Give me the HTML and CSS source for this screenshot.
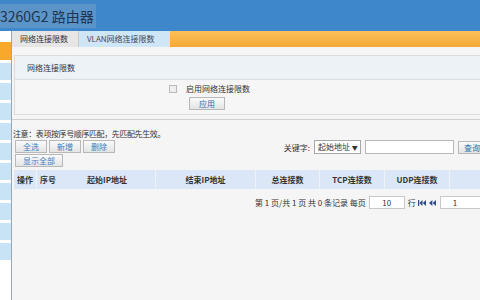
FILE: index.html
```html
<!DOCTYPE html>
<html lang="zh">
<head>
<meta charset="utf-8">
<link rel="stylesheet" href="styles.css">
</head>
<body>
<div class="header"><span class="title">3260G2 路由器</span></div>
<div class="body">
  <div class="sidebar">
    <div class="sb sb-a"></div>
    <div class="sb sb-o"></div>
    <div class="sb"></div>
    <div class="sb"></div>
    <div class="sb"></div>
    <div class="sb"></div>
    <div class="sb"></div>
    <div class="sb"></div>
    <div class="sb"></div>
    <div class="sb"></div>
    <div class="sb"></div>
    <div class="sb"></div>
  </div>
  <div class="main">
    <div class="tabs">
      <div class="tab tab-active">网络连接限数</div>
      <div class="tab tab-second">VLAN网络连接限数</div>
    </div>
    <div class="content">
      <div class="box">
        <div class="box-head">网络连接限数</div>
        <div class="box-body">
          <label class="check"><span class="cb"></span>启用网络连接限数</label>
          <button class="btn apply">应用</button>
        </div>
      </div>
      <div class="rule"></div>
      <div class="note">注意：表项按序号顺序匹配，先匹配先生效。</div>
      <div class="toolbar">
        <div class="left-tools">
          <div class="btn-row">
            <button class="btn">全选</button><button class="btn">新增</button><button class="btn">删除</button>
          </div>
          <div class="btn-row"><button class="btn">显示全部</button></div>
        </div>
        <div class="search">
          <span class="kw">关键字:</span>
          <span class="select">起始地址 <span class="arrow">▼</span></span>
          <span class="input"></span>
          <button class="btn">查询</button>
        </div>
      </div>
      <div class="thead">
        <div class="th c1">操作</div>
        <div class="th c2">序号</div>
        <div class="th c3">起始IP地址</div>
        <div class="th c4">结束IP地址</div>
        <div class="th c5">总连接数</div>
        <div class="th c6">TCP连接数</div>
        <div class="th c7">UDP连接数</div>
        <div class="th c8"></div>
      </div>
      <div class="pager">
        <span class="ptext">第 1 页/共 1 页 共 0 条记录 每页</span>
        <span class="pinput">10</span>
        <span class="ptext">行</span>
        <svg class="nav" width="8" height="6" viewBox="0 0 8 6"><rect x="0" y="0" width="1.2" height="6" fill="#2a4a8c"/><polygon points="4.5,0 4.5,6 1.3,3" fill="#2a4a8c"/><polygon points="8,0 8,6 4.8,3" fill="#2a4a8c"/></svg>
        <svg class="nav nav2" width="7" height="6" viewBox="0 0 7 6"><polygon points="3.4,0 3.4,6 0,3" fill="#2a4a8c"/><polygon points="7,0 7,6 3.6,3" fill="#2a4a8c"/></svg>
        <span class="pinput pinput2">1</span>
      </div>
    </div>
  </div>
</div>
</body>
</html>
```

FILE: styles.css
```css
html, body {
  margin: 0;
  padding: 0;
  width: 480px;
  height: 300px;
  overflow: hidden;
  background: #f5f5f5;
  font-family: "Noto Sans CJK SC", "Liberation Sans", sans-serif;
  font-size: 8px;
  color: #333;
}
.header {
  height: 31px;
  background: #3e87ca;
  display: flex;
  align-items: center;
}
.title {
  font-size: 14px;
  color: #1f3552;
  background: #5a94c8;
  padding: 1px 2px 1px 0;
  line-height: 22px;
}
.body {
  display: flex;
  height: 269px;
}
.sidebar {
  width: 11px;
  border-right: 1px solid #9aa6b3;
  display: flex;
  flex-direction: column;
  gap: 3px;
  background: #fff;
}
.sb {
  height: 17px;
  background: #c8e2f6;
}
.sb-a {
  height: 8px;
  background: #fff;
}
.sb-o {
  height: 18px;
  background: #f6a92a;
}
.main {
  flex: 1;
  min-width: 0;
  display: flex;
  flex-direction: column;
  background: #f5f5f5;
  overflow: hidden;
}
.tabs {
  height: 16px;
  display: flex;
  background: linear-gradient(#fbc05b, #f3a935);
}
.tab {
  line-height: 16px;
  padding: 0 8px;
  color: #333;
}
.tab-active {
  background: #e6e6e6;
  width: 50px;
  border-right: 1px solid #c9c9c9;
}
.tab-second {
  background: #cfe6f7;
  width: 75px;
  color: #3f4a55;
}
.content {
  display: flex;
  flex-direction: column;
  padding: 8px 0 0 2px;
}
.box {
  border: 1px solid #dcdcdc;
  border-right: none;
  background: #f6f6f6;
}
.box-head {
  height: 23px;
  line-height: 23px;
  padding-left: 12px;
  background: #edf2f7;
  border-bottom: 1px solid #d8dee6;
}
.box-body {
  display: flex;
  flex-direction: column;
  align-items: flex-start;
  padding: 3px 0 4px 154px;
  gap: 2px;
}
.check {
  display: flex;
  align-items: center;
  gap: 9px;
  line-height: 12px;
}
.cb {
  width: 6px;
  height: 6px;
  border: 1px solid #bbb;
  background: #eee;
}
.btn {
  font-family: inherit;
  font-size: 8px;
  color: #3569a8;
  background: linear-gradient(#fafafa, #e4e4e4);
  border: 1px solid #b8b8b8;
  padding: 0 5px;
  height: 13px;
  line-height: 11px;
  margin: 0;
  white-space: nowrap;
}
.apply {
  margin-left: 20px;
  padding: 0 9px;
}
.rule {
  height: 1px;
  background: #cfcfcf;
  margin-top: 4px;
  margin-left: -2px;
}
.note {
  margin-top: 8px;
  margin-left: -1px;
  line-height: 11px;
  letter-spacing: -0.4px;
}
.toolbar {
  display: flex;
  justify-content: space-between;
  align-items: flex-start;
  margin-top: 1px;
  margin-left: 1px;
}
.left-tools {
  display: flex;
  flex-direction: column;
  gap: 1px;
}
.btn-row {
  display: flex;
  gap: 2px;
}
.btn-row .btn {
  padding: 0 7px;
  color: #3f7bc0;
}
.search {
  display: flex;
  align-items: center;
  gap: 4px;
  margin-right: -6px;
  flex-shrink: 0;
}
.kw {
  white-space: nowrap;
}
.select {
  width: 42px;
  height: 12px;
  line-height: 12px;
  border: 1px solid #a8a8a8;
  background: #fff;
  padding-left: 3px;
  color: #333;
  white-space: nowrap;
}
.arrow {
  font-size: 6px;
}
.input {
  width: 87px;
  height: 12px;
  border: 1px solid #b8b8b8;
  background: #fff;
}
.thead {
  display: flex;
  height: 19px;
  margin-top: 3px;
  background: #dbe7f7;
}
.th {
  line-height: 19px;
  text-align: center;
  font-weight: bold;
  color: #333;
  border-right: 1px solid #eef3fa;
  white-space: nowrap;
}
.c1 { width: 22px; }
.c2 { width: 22px; border-right: none; }
.c3 { width: 96px; }
.c4 { width: 99px; }
.c5 { width: 63px; }
.c6 { width: 64px; }
.c7 { width: 64px; }
.c8 { flex: 1; border-right: none; }
.pager {
  display: flex;
  align-items: center;
  padding-left: 241px;
  margin-top: 7px;
  gap: 2px;
  line-height: 13px;
  white-space: nowrap;
}
.ptext {
  flex-shrink: 0;
}
.pinput {
  flex-shrink: 0;
  width: 34px;
  height: 11px;
  border: 1px solid #c8c8c8;
  background: #fff;
  text-align: center;
  line-height: 11px;
  margin: 0 1px;
}
.nav {
  flex-shrink: 0;
}
.nav2 {
  margin-left: 1px;
}
.pinput2 {
  width: 28px;
  text-align: left;
  padding-left: 12px;
  margin-left: 2px;
}
```
